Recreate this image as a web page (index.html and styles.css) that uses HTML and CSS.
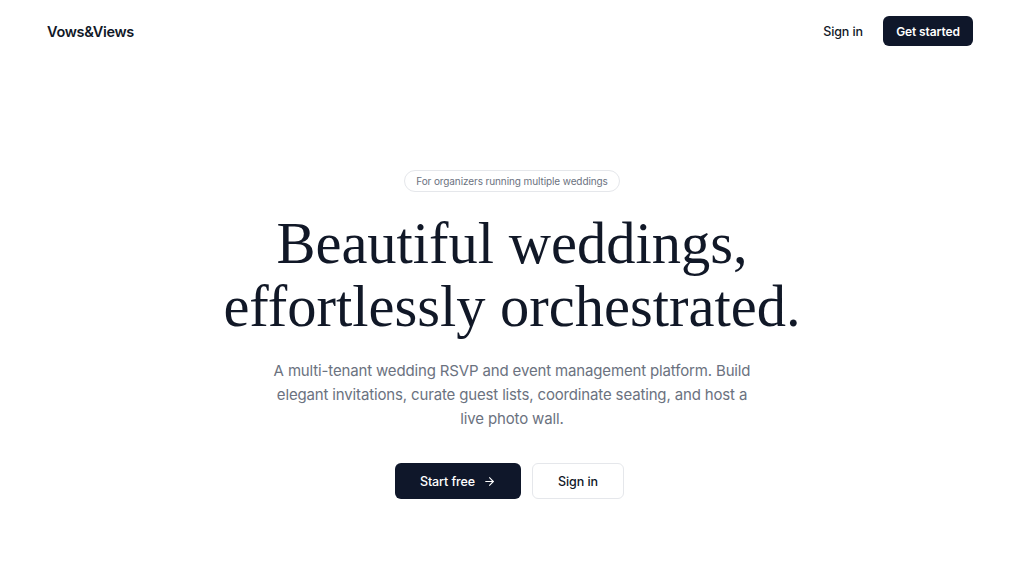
FILE: index.html
```html
<!DOCTYPE html>
<html lang="en">
<head>
<meta charset="utf-8">
<title>Vows&amp;Views</title>
<link rel="stylesheet" href="styles.css">
</head>
<body>
<header class="topbar">
  <div class="logo">Vows&amp;Views</div>
  <nav class="nav">
    <a class="nav-link" href="#">Sign in</a>
    <a class="btn-dark btn-small" href="#">Get started</a>
  </nav>
</header>
<main class="hero">
  <div class="badge">For organizers running multiple weddings</div>
  <h1 class="title">Beautiful weddings,<br>effortlessly orchestrated.</h1>
  <p class="lead">A multi-tenant wedding RSVP and event management platform. Build elegant invitations, curate guest lists, coordinate seating, and host a live photo wall.</p>
  <div class="actions">
    <a class="btn-dark btn-large" href="#">Start free
      <svg class="arrow" width="13" height="13" viewBox="0 0 24 24" fill="none" stroke="currentColor" stroke-width="2" stroke-linecap="round" stroke-linejoin="round"><path d="M5 12h14"/><path d="M12 5l7 7-7 7"/></svg>
    </a>
    <a class="btn-light btn-large" href="#">Sign in</a>
  </div>
</main>
</body>
</html>
```
FILE: styles.css
```css
* { box-sizing: border-box; }
html, body { margin: 0; padding: 0; background: #ffffff; }
body {
  font-family: Inter, "Noto Sans", sans-serif;
  color: #0f172a;
  width: 1024px;
  height: 578px;
  overflow: hidden;
}
a { text-decoration: none; }
.topbar {
  display: flex;
  align-items: center;
  justify-content: space-between;
  height: 62px;
  padding: 0 51px 0 47px;
}
.logo {
  font-size: 14.5px;
  font-weight: 600;
  letter-spacing: -0.3px;
  color: #111827;
}
.nav {
  display: flex;
  align-items: center;
  gap: 20px;
}
.nav-link {
  font-size: 12.5px;
  font-weight: 500;
  letter-spacing: -0.1px;
  color: #111827;
}
.btn-dark {
  background: #0f172a;
  color: #ffffff;
  border-radius: 6px;
  font-weight: 600;
  display: inline-flex;
  align-items: center;
  justify-content: center;
}
.btn-small {
  height: 30px;
  width: 90px;
  font-size: 12px;
  letter-spacing: -0.1px;
}
.hero {
  display: flex;
  flex-direction: column;
  align-items: center;
  padding-top: 108px;
}
.badge {
  border: 1px solid #e5e7eb;
  border-radius: 999px;
  height: 22px;
  padding: 0 11px;
  display: flex;
  align-items: center;
  font-size: 10px;
  letter-spacing: -0.1px;
  color: #6b7280;
}
.title {
  margin: 20px 0 0;
  font-family: "Liberation Serif", "DejaVu Serif", serif;
  font-weight: 400;
  font-size: 58.5px;
  line-height: 63px;
  text-align: center;
  color: #111827;
  letter-spacing: 0;
}
.lead {
  margin: 21px 0 0;
  width: 490px;
  text-align: center;
  font-size: 15px;
  letter-spacing: -0.15px;
  line-height: 24px;
  color: #6b7280;
}
.actions {
  display: flex;
  gap: 11px;
  margin-top: 32px;
  padding-right: 5px;
}
.btn-large {
  height: 36px;
  font-size: 12.5px;
  font-weight: 500;
  letter-spacing: -0.1px;
}
.btn-dark.btn-large { width: 126px; gap: 8px; }
.btn-light {
  width: 92px;
  border: 1px solid #e5e7eb;
  border-radius: 6px;
  color: #111827;
  background: #fff;
  display: inline-flex;
  align-items: center;
  justify-content: center;
}
.arrow { display: block; }
```
